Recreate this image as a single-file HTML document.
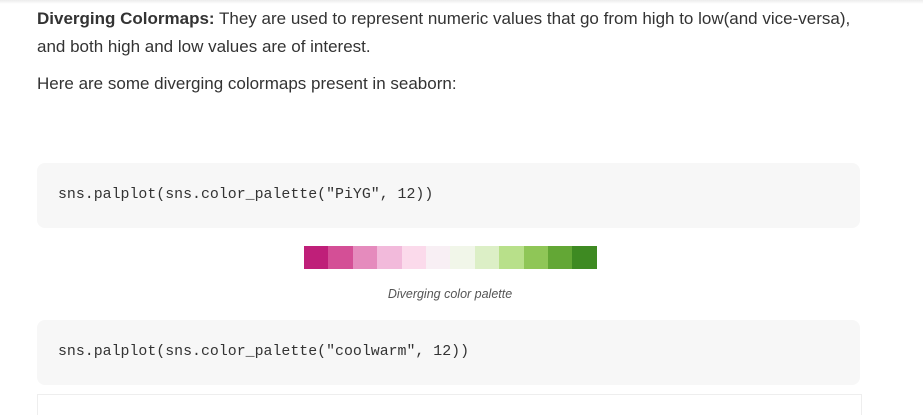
<!DOCTYPE html>
<html><head><meta charset="utf-8"><style>
body{margin:0;width:923px;height:407px;background:#fff;position:relative;overflow:hidden;font-family:"Liberation Sans",sans-serif;color:#333}
.top{position:absolute;left:0;top:0;width:923px;height:4px;background:linear-gradient(#ececec,#fff)}
.t{position:absolute;left:37px;font-size:17px;white-space:nowrap;line-height:20px}
.code{position:absolute;left:37px;width:823px;height:65px;background:#f7f7f7;border-radius:8px}
.code span{position:absolute;left:21px;top:24px;font-family:"Liberation Mono",monospace;font-size:14.9px;color:#333}
.pal{position:absolute;left:304px;top:246px;display:flex;height:23px}
.pal div{width:24.4px;height:23px}
.cap{position:absolute;left:0;width:900px;text-align:center;top:287px;font-size:12.5px;font-style:italic;color:#555}
.box{position:absolute;left:37px;top:394px;width:823px;height:20px;border:1px solid #eee;border-bottom:none}
</style></head><body>
<div class="top"></div>
<div class="t" style="top:9px"><b>Diverging Colormaps:</b> They are used to represent numeric values that go from high to low(and vice-versa),</div>
<div class="t" style="top:37px">and both high and low values are of interest.</div>
<div class="t" style="top:74px">Here are some diverging colormaps present in seaborn:</div>
<div class="code" style="top:163px"><span>sns.palplot(sns.color_palette("PiYG", 12))</span></div>
<div class="pal">
<div style="background:#bf1f79"></div><div style="background:#d44f96"></div><div style="background:#e58bbd"></div><div style="background:#f2badb"></div><div style="background:#fbdaeb"></div><div style="background:#f8eff4"></div><div style="background:#f1f6e9"></div><div style="background:#dcefc6"></div><div style="background:#b8e08a"></div><div style="background:#8fc657"></div><div style="background:#63a735"></div><div style="background:#3e8a22"></div>
</div>
<div class="cap">Diverging color palette</div>
<div class="code" style="top:320px"><span>sns.palplot(sns.color_palette("coolwarm", 12))</span></div>
<div class="box"></div>
</body></html>
